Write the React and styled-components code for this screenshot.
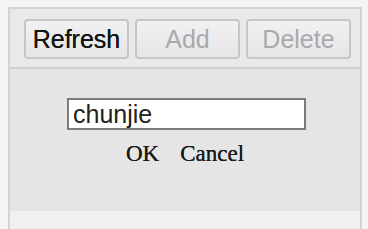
import React from "react";
import styled, { createGlobalStyle } from "styled-components";

const Global = createGlobalStyle`
  html, body { margin: 0; padding: 0; background: #f4f4f6; }
  body { width: 368px; height: 229px; overflow: hidden; }
`;

const Panel = styled.div`
  margin: 7px 0 0 8px;
  width: 350px;
  border: 2px solid #d3d3d6;
  border-bottom: none;
  background: #e8e8ea;
`;

const Toolbar = styled.div`
  display: flex;
  gap: 6px;
  padding: 10px 0 8px 14px;
  border-bottom: 2px solid #d0d0d2;
  background: #e9e9eb;
`;

const ToolButton = styled.button`
  width: 105px;
  height: 40px;
  box-sizing: border-box;
  border: 2px solid #c6c6c8;
  border-radius: 4px;
  background: linear-gradient(#f1f1f2, #e6e6e8);
  font-family: "Liberation Sans", Arial, sans-serif;
  font-size: 25px;
  padding: 0;
  color: ${(p) => (p.disabled ? "#a9a9ab" : "#151515")};
  text-shadow: ${(p) => (p.disabled ? "none" : "0 0 0.4px #151515")};
`;

const Content = styled.div`
  height: 142px;
  box-sizing: border-box;
  background: #e5e5e5;
  display: flex;
  flex-direction: column;
  align-items: center;
  padding-top: 29px;
`;

const NameInput = styled.input`
  width: 239px;
  height: 32px;
  box-sizing: border-box;
  border: 2px solid #7b7b7b;
  background: #fff;
  font-family: "Liberation Sans", Arial, sans-serif;
  font-size: 25px;
  color: #222;
  padding: 0 4px;
  margin-left: 3px;
  outline: none;
`;

const Actions = styled.div`
  display: flex;
  gap: 21px;
  margin-top: 11px;
`;

const TextButton = styled.button`
  border: none;
  background: none;
  padding: 0;
  font-family: "Liberation Serif", "Times New Roman", serif;
  font-size: 23px;
  line-height: 26px;
  color: #1a1a1a;
  text-shadow: 0 0 0.4px #1a1a1a;
`;

const Footer = styled.div`
  height: 18px;
  background: #f1f1f4;
`;

export default function App() {
  return (
    <>
      <Global />
      <Panel>
        <Toolbar>
          <ToolButton>Refresh</ToolButton>
          <ToolButton disabled>Add</ToolButton>
          <ToolButton disabled>Delete</ToolButton>
        </Toolbar>
        <Content>
          <NameInput defaultValue="chunjie" />
          <Actions>
            <TextButton>OK</TextButton>
            <TextButton>Cancel</TextButton>
          </Actions>
        </Content>
        <Footer />
      </Panel>
    </>
  );
}
